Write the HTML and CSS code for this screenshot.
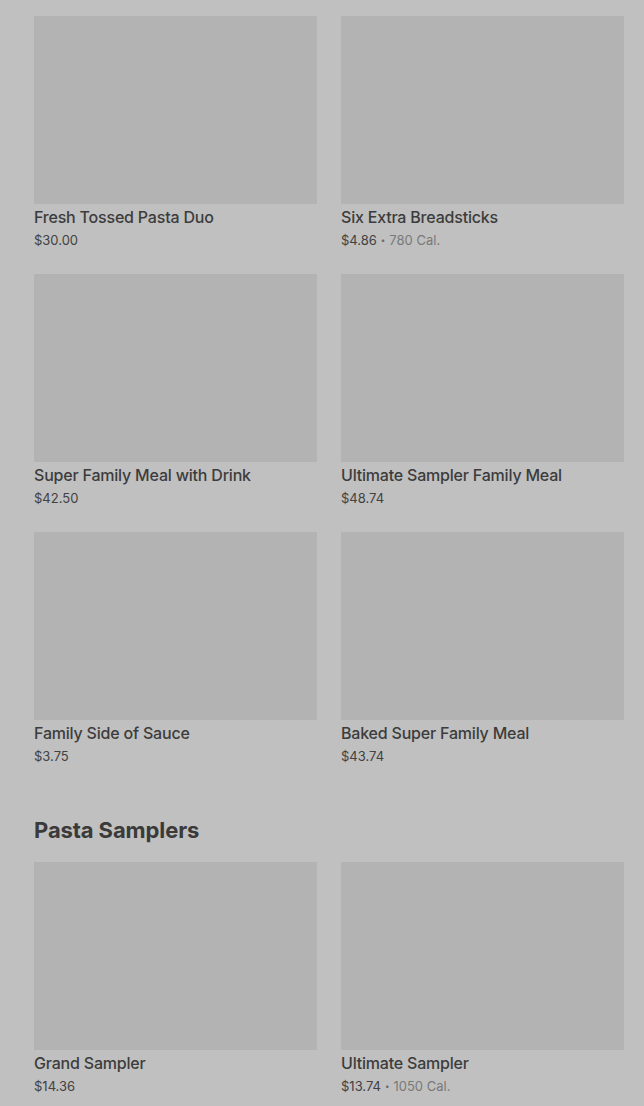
FILE: index.html
```html
<!DOCTYPE html>
<html>
<head>
<meta charset="utf-8">
<link rel="stylesheet" href="styles.css">
</head>
<body>
<div class="page">
  <div class="grid">
    <div class="card"><div class="thumb"></div><div class="title">Fresh Tossed Pasta Duo</div><div class="meta"><span class="price">$30.00</span></div></div>
    <div class="card"><div class="thumb"></div><div class="title">Six Extra Breadsticks</div><div class="meta"><span class="price">$4.86</span><span class="dot">•</span><span class="cal">780 Cal.</span></div></div>
    <div class="card"><div class="thumb"></div><div class="title">Super Family Meal with Drink</div><div class="meta"><span class="price">$42.50</span></div></div>
    <div class="card"><div class="thumb"></div><div class="title">Ultimate Sampler Family Meal</div><div class="meta"><span class="price">$48.74</span></div></div>
    <div class="card"><div class="thumb"></div><div class="title">Family Side of Sauce</div><div class="meta"><span class="price">$3.75</span></div></div>
    <div class="card"><div class="thumb"></div><div class="title">Baked Super Family Meal</div><div class="meta"><span class="price">$43.74</span></div></div>
  </div>
  <h2 class="section-title">Pasta Samplers</h2>
  <div class="grid">
    <div class="card"><div class="thumb"></div><div class="title">Grand Sampler</div><div class="meta"><span class="price">$14.36</span></div></div>
    <div class="card"><div class="thumb"></div><div class="title">Ultimate Sampler</div><div class="meta"><span class="price">$13.74</span><span class="dot">•</span><span class="cal">1050 Cal.</span></div></div>
  </div>
</div>
</body>
</html>
```
FILE: styles.css
```css
html, body {
  margin: 0;
  padding: 0;
  background: #c0c0c0;
}
body {
  font-family: Inter, "Noto Sans", sans-serif;
  color: #3b3b3b;
  overflow: hidden;
}
.page {
  padding: 16px 20px 0 34px;
}
.grid {
  display: grid;
  grid-template-columns: 283px 283px;
  column-gap: 24px;
  row-gap: 24px;
}
.thumb {
  height: 188px;
  background: #b3b3b3;
}
.title {
  margin-top: 3px;
  font-size: 16px;
  line-height: 20px;
  font-weight: 500;
  letter-spacing: -0.2px;
  color: #3c3c3c;
  white-space: nowrap;
}
.meta {
  margin-top: 3px;
  font-size: 13px;
  line-height: 20px;
  color: #424242;
  display: flex;
  align-items: center;
}
.dot {
  margin: 0 4px;
  font-size: 8px;
  color: #6a6a6a;
}
.cal {
  color: #797979;
}
.section-title {
  margin: 50px 0 18px;
  font-size: 22px;
  line-height: 28px;
  font-weight: 700;
  color: #3a3a3a;
  letter-spacing: -0.1px;
}
```
